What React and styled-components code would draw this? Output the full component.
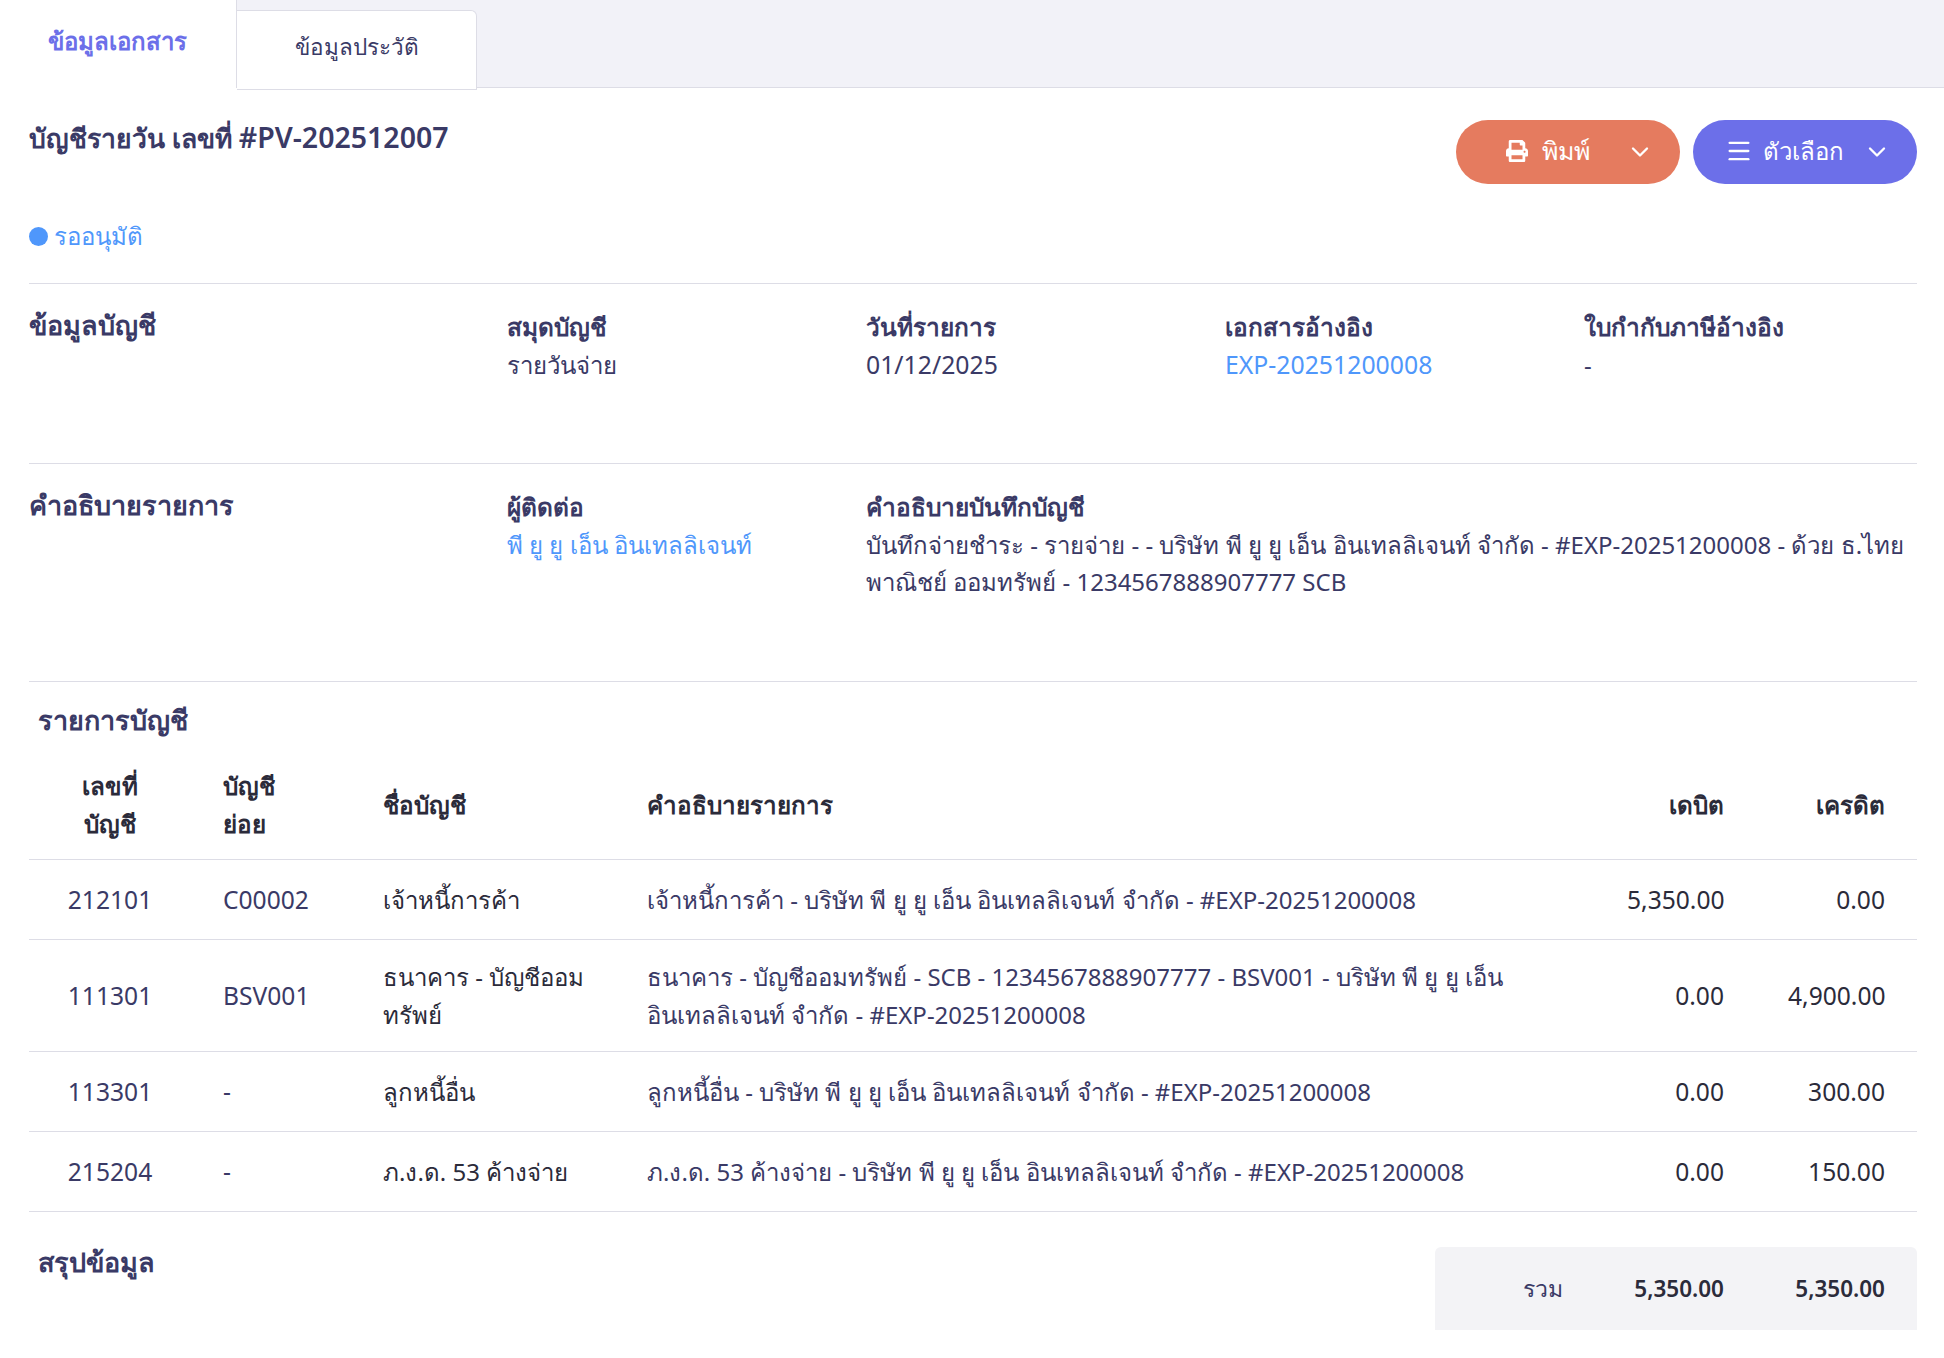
import React from "react";
import styled, { createGlobalStyle } from "styled-components";
import { ChevronDown, Menu } from "lucide-react";
import { FaPrint } from "react-icons/fa";

const rows = [
  {
    code: "212101",
    sub: "C00002",
    name: "เจ้าหนี้การค้า",
    desc: "เจ้าหนี้การค้า - บริษัท พี ยู ยู เอ็น อินเทลลิเจนท์ จำกัด - #EXP-20251200008",
    debit: "5,350.00",
    credit: "0.00",
  },
  {
    code: "111301",
    sub: "BSV001",
    name: "ธนาคาร - บัญชีออม\nทรัพย์",
    desc: "ธนาคาร - บัญชีออมทรัพย์ - SCB - 1234567888907777 - BSV001 - บริษัท พี ยู ยู เอ็น อินเทลลิเจนท์ จำกัด - #EXP-20251200008",
    debit: "0.00",
    credit: "4,900.00",
  },
  {
    code: "113301",
    sub: "-",
    name: "ลูกหนี้อื่น",
    desc: "ลูกหนี้อื่น - บริษัท พี ยู ยู เอ็น อินเทลลิเจนท์ จำกัด - #EXP-20251200008",
    debit: "0.00",
    credit: "300.00",
  },
  {
    code: "215204",
    sub: "-",
    name: "ภ.ง.ด. 53 ค้างจ่าย",
    desc: "ภ.ง.ด. 53 ค้างจ่าย - บริษัท พี ยู ยู เอ็น อินเทลลิเจนท์ จำกัด - #EXP-20251200008",
    debit: "0.00",
    credit: "150.00",
  },
];

const App = () => {
  return (
    <Page>
      <GlobalStyle />
      <TabBar>
        <ActiveTab>ข้อมูลเอกสาร</ActiveTab>
        <Tab>ข้อมูลประวัติ</Tab>
      </TabBar>
      <Content>
        <TitleRow>
          <Title>
            บัญชีรายวัน เลขที่ <TitleCode>#PV-202512007</TitleCode>
          </Title>
          <Actions>
            <ActionButton $bg="#e57b5f" $pad={50}>
              <ButtonLabel $gap={14} $size={25}>
                <FaPrint size={22} />
                พิมพ์
              </ButtonLabel>
              <ChevronDown size={28} strokeWidth={2} />
            </ActionButton>
            <ActionButton $bg="#6c6fe9" $pad={32}>
              <ButtonLabel $gap={10} $size={24}>
                <Menu size={28} strokeWidth={2} />
                ตัวเลือก
              </ButtonLabel>
              <ChevronDown size={28} strokeWidth={2} />
            </ActionButton>
          </Actions>
        </TitleRow>
        <Status>
          <Dot />
          รออนุมัติ
        </Status>
        <InfoSection $height={180}>
          <SectionName>ข้อมูลบัญชี</SectionName>
          <Field>
            <FieldLabel>สมุดบัญชี</FieldLabel>
            <FieldValue>รายวันจ่าย</FieldValue>
          </Field>
          <Field>
            <FieldLabel>วันที่รายการ</FieldLabel>
            <FieldValue $latin>01/12/2025</FieldValue>
          </Field>
          <Field>
            <FieldLabel>เอกสารอ้างอิง</FieldLabel>
            <FieldLink $latin>EXP-20251200008</FieldLink>
          </Field>
          <Field>
            <FieldLabel>ใบกำกับภาษีอ้างอิง</FieldLabel>
            <FieldValue>-</FieldValue>
          </Field>
        </InfoSection>
        <InfoSection $height={218}>
          <SectionName>คำอธิบายรายการ</SectionName>
          <Field>
            <FieldLabel>ผู้ติดต่อ</FieldLabel>
            <FieldLink>พี ยู ยู เอ็น อินเทลลิเจนท์</FieldLink>
          </Field>
          <WideField>
            <FieldLabel>คำอธิบายบันทึกบัญชี</FieldLabel>
            <FieldValue>
              บันทึกจ่ายชำระ - รายจ่าย - - บริษัท พี ยู ยู เอ็น อินเทลลิเจนท์ จำกัด - #EXP-20251200008 - ด้วย ธ.ไทยพาณิชย์ ออมทรัพย์ - 1234567888907777 SCB
            </FieldValue>
          </WideField>
        </InfoSection>
        <TableSection>
          <TableHeading>รายการบัญชี</TableHeading>
          <Table>
            <colgroup>
              <col width="162" />
              <col width="160" />
              <col width="264" />
              <col />
              <col width="161" />
              <col width="161" />
            </colgroup>
            <thead>
              <tr>
                <Th $align="center">เลขที่<br />บัญชี</Th>
                <Th>บัญชี<br />ย่อย</Th>
                <Th>ชื่อบัญชี</Th>
                <Th>คำอธิบายรายการ</Th>
                <Th $align="right">เดบิต</Th>
                <Th $align="right">เครดิต</Th>
              </tr>
            </thead>
            <tbody>
              {rows.map((row) => (
                <tr key={row.code}>
                  <Td $align="center" $latin>{row.code}</Td>
                  <Td $latin>{row.sub}</Td>
                  <NameCell>{row.name}</NameCell>
                  <Td>{row.desc}</Td>
                  <Td $align="right" $dark $latin>{row.debit}</Td>
                  <Td $align="right" $dark $latin>{row.credit}</Td>
                </tr>
              ))}
            </tbody>
          </Table>
        </TableSection>
        <Summary>
          <SummaryHeading>สรุปข้อมูล</SummaryHeading>
          <TotalBox>
            <TotalLabel>รวม</TotalLabel>
            <TotalValue>5,350.00</TotalValue>
            <TotalValue>5,350.00</TotalValue>
          </TotalBox>
        </Summary>
      </Content>
    </Page>
  );
};

const GlobalStyle = createGlobalStyle`
  body {
    margin: 0;
    background: #fff;
    color: #3a3a66;
    font-family: "Noto Sans", "Liberation Sans", sans-serif;
    font-size: 24px;
    line-height: 37.5px;
  }
`;

const Page = styled.div`
  width: 1944px;
  height: 1358px;
  overflow: hidden;
`;

const TabBar = styled.div`
  display: flex;
  align-items: flex-start;
  height: 87px;
  background: #f2f2f8;
  border-bottom: 1px solid #dddde6;
`;

const ActiveTab = styled.div`
  width: 237px;
  height: 88px;
  padding: 22px 0 0 48px;
  box-sizing: border-box;
  background: #fff;
  color: #6c6fe9;
  font-weight: 600;
  border-right: 1px solid #dddde6;
`;

const Tab = styled.div`
  width: 240px;
  height: 80px;
  margin-top: 10px;
  padding-top: 17px;
  box-sizing: border-box;
  text-align: center;
  font-size: 22.5px;
  background: #fff;
  border: 1px solid #dddde6;
  border-left: none;
  border-radius: 0 6px 0 0;
`;

const Content = styled.div`
  padding: 0 27px 0 29px;
`;

const TitleRow = styled.div`
  display: flex;
  justify-content: space-between;
  align-items: flex-start;
  padding-top: 32px;
  height: 97px;
`;

const Title = styled.h1`
  margin: -3px 0 0;
  font-size: 26.5px;
  line-height: 40px;
  font-weight: 600;
`;

const TitleCode = styled.span`
  font-size: 28.5px;
`;

const Actions = styled.div`
  display: flex;
  gap: 13px;
`;

const ActionButton = styled.button`
  display: flex;
  align-items: center;
  justify-content: space-between;
  width: 224px;
  height: 64px;
  padding: 0 26px 0 ${(p) => p.$pad}px;
  border: none;
  border-radius: 32px;
  background: ${(p) => p.$bg};
  color: #fff;
  font: inherit;
`;

const ButtonLabel = styled.span`
  display: flex;
  align-items: center;
  gap: ${(p) => p.$gap}px;
  font-size: ${(p) => p.$size}px;
  margin-top: -2px;
`;

const Status = styled.div`
  display: flex;
  align-items: center;
  gap: 6px;
  height: 38px;
  color: #4f97fb;
  margin-bottom: 28px;
`;

const Dot = styled.span`
  width: 19px;
  height: 19px;
  border-radius: 50%;
  background: #4f97fb;
`;

const InfoSection = styled.section`
  display: grid;
  grid-template-columns: 478px 359px 359px 359px 1fr;
  height: ${(p) => p.$height}px;
  box-sizing: border-box;
  padding-top: 24px;
  border-top: 1px solid #dddde6;
`;

const SectionName = styled.h2`
  margin: -2px 0 0;
  font-size: 27px;
  line-height: 38px;
  font-weight: 600;
`;

const Field = styled.div`
  min-width: 0;
`;

const WideField = styled.div`
  grid-column: 3 / 6;
`;

const FieldLabel = styled.div`
  font-size: 24.4px;
  font-weight: 600;
`;

const FieldValue = styled.div`
  font-size: ${(p) => (p.$latin ? "24.8px" : "24px")};
`;

const FieldLink = styled.a`
  display: block;
  color: #4f97fb;
  font-size: ${(p) => (p.$latin ? "24.8px" : "24px")};
`;

const TableSection = styled.section`
  border-top: 1px solid #dddde6;
  padding-top: 19px;
`;

const TableHeading = styled.h2`
  margin: 0 0 28px 9px;
  font-size: 27px;
  line-height: 38px;
  font-weight: 600;
`;

const Table = styled.table`
  width: 100%;
  table-layout: fixed;
  border-collapse: collapse;
`;

const Th = styled.th`
  padding: 0 32px 17px;
  text-align: ${(p) => p.$align || "left"};
  font-size: 24.2px;
  font-weight: 600;
  color: #2b2b3a;
  border-bottom: 1px solid #dddde6;
`;

const Td = styled.td`
  padding: 18px 32px;
  height: 80px;
  box-sizing: border-box;
  text-align: ${(p) => p.$align || "left"};
  font-size: ${(p) => (p.$latin ? "24.6px" : "24px")};
  color: ${(p) => (p.$dark ? "#2b2b3a" : "inherit")};
  border-bottom: 1px solid #dddde6;
`;

const NameCell = styled(Td)`
  white-space: pre;
  color: #2b2b3a;
`;

const Summary = styled.section`
  display: flex;
  justify-content: space-between;
  align-items: flex-start;
  padding-top: 35px;
`;

const SummaryHeading = styled.h2`
  margin: -4px 0 0 9px;
  font-size: 27px;
  line-height: 38px;
  font-weight: 600;
`;

const TotalBox = styled.div`
  display: flex;
  align-items: center;
  justify-content: flex-end;
  width: 482px;
  height: 83px;
  padding-right: 32px;
  box-sizing: border-box;
  background: #f3f3f6;
  border-radius: 6px 6px 0 0;
  font-size: 23px;
`;

const TotalLabel = styled.span``;

const TotalValue = styled.span`
  width: 161px;
  text-align: right;
  font-size: 22.5px;
  font-weight: 600;
  color: #2b2b3a;
`;

export default App;
